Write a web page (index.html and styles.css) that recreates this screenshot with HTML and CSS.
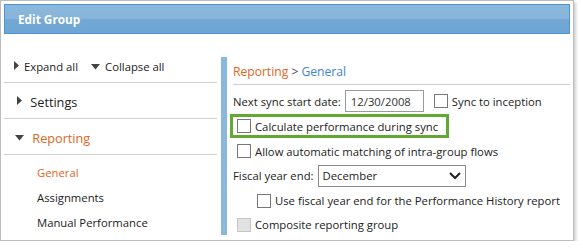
FILE: index.html
```html
<!DOCTYPE html>
<html lang="en">
<head>
    <meta charset="UTF-8">
    <meta name="viewport" content="width=device-width, initial-scale=1.0">
    <title>Edit Group</title>
    <link rel="stylesheet" href="styles.css">
</head>
<body>
    <div class="frame">
        <div class="title-bar">Edit Group</div>
        <div class="content">
            <div class="nav">
                <div class="nav-tools">
                    <span class="tool">
                        <svg width="5" height="9" viewBox="0 0 5 9"><path d="M0 0 L5 4.5 L0 9 Z" fill="#444"/></svg>
                        Expand all
                    </span>
                    <span class="tool">
                        <svg width="9" height="6" viewBox="0 0 9 6"><path d="M0 0 L9 0 L4.5 5.5 Z" fill="#444"/></svg>
                        Collapse all
                    </span>
                </div>
                <div class="nav-section">
                    <svg class="arrow-right" width="5" height="9" viewBox="0 0 5 9"><path d="M0 0 L5 4.5 L0 9 Z" fill="#444"/></svg>
                    Settings
                </div>
                <div class="nav-section open">
                    <svg class="arrow-down" width="9" height="6" viewBox="0 0 9 6"><path d="M0 0 L9 0 L4.5 5.5 Z" fill="#444"/></svg>
                    Reporting
                </div>
                <ul class="nav-items">
                    <li class="active">General</li>
                    <li>Assignments</li>
                    <li>Manual Performance</li>
                </ul>
            </div>
            <div class="panel">
                <div class="crumbs"><span class="crumb-parent">Reporting</span> &gt; <span class="crumb-current">General</span></div>
                <div class="row first">
                    <label>Next sync start date:</label>
                    <input class="date" type="text" value="12/30/2008">
                    <span class="check"></span>
                    <label>Sync to inception</label>
                </div>
                <div class="row highlight">
                    <span class="check"></span>
                    <label>Calculate performance during sync</label>
                </div>
                <div class="row">
                    <span class="check"></span>
                    <label>Allow automatic matching of intra-group flows</label>
                </div>
                <div class="row">
                    <label>Fiscal year end:</label>
                    <div class="select">
                        December
                        <svg width="12" height="8" viewBox="0 0 12 8"><path d="M1 1 L6 6 L11 1" fill="none" stroke="#222" stroke-width="2"/></svg>
                    </div>
                </div>
                <div class="row indent">
                    <span class="check"></span>
                    <label>Use fiscal year end for the Performance History report</label>
                </div>
                <div class="row last">
                    <span class="check disabled"></span>
                    <label>Composite reporting group</label>
                </div>
            </div>
        </div>
    </div>
</body>
</html>
```

FILE: styles.css
```css
body {
    margin: 0;
    padding: 0;
    background: white;
    font-family: "Open Sans", "Noto Sans", sans-serif;
    font-size: 11.3px;
    color: #222;
    white-space: nowrap;
}
.frame {
    width: 566px;
    height: 233px;
    padding: 3px;
    border: 1px solid #bdbdbd;
    background: white;
    box-shadow: 2px 2px 3px rgba(0, 0, 0, 0.2);
}
.title-bar {
    height: 28px;
    line-height: 28px;
    padding-left: 13px;
    border: 1px solid #4d94d4;
    background: linear-gradient(to bottom, #8bb8dd 0%, #86b4da 50%, #72a8d4 52%, #6ea5d2 100%);
    color: white;
    font-weight: bold;
    font-size: 11.8px;
}
.content {
    display: flex;
    height: 203px;
}
.nav {
    width: 213px;
    flex: none;
}
.nav-tools {
    display: flex;
    gap: 13px;
    padding: 24px 0 6px 10px;
    line-height: 18px;
    border-bottom: 1px solid #cfcfcf;
}
.tool svg {
    margin-right: 2px;
    vertical-align: 1px;
}
.nav-section {
    padding: 10px 0 7px 13px;
    line-height: 18px;
    font-size: 12.7px;
    border-bottom: 1px solid #cfcfcf;
}
.nav-section svg {
    margin-right: 5px;
    vertical-align: 2px;
}
.nav-section.open {
    color: #e0651c;
    padding-left: 11px;
}
.nav-items {
    list-style: none;
    margin: 0;
    padding: 5px 0 0 33px;
}
.nav-items li {
    line-height: 25px;
}
.nav-items li.active {
    color: #e0651c;
}
.panel {
    flex: 1;
    margin: 23px 0 2px 4px;
    border-left: 6px solid #8ab8dc;
    padding-left: 6px;
    display: flex;
    flex-direction: column;
    align-items: flex-start;
}
.crumbs {
    align-self: stretch;
    margin-top: 6px;
    line-height: 18px;
    padding-bottom: 3px;
    font-size: 12.1px;
    color: #444;
    border-bottom: 1px solid #cfcfcf;
}
.crumb-parent {
    color: #e0651c;
}
.crumb-current {
    color: #3b86c8;
}
.row {
    display: flex;
    align-items: center;
    height: 22px;
    margin-top: 3px;
    gap: 4px;
}
.row.first {
    margin-top: 5px;
}
.date {
    width: 79px;
    height: 22px;
    box-sizing: border-box;
    padding: 0 5px;
    border: 1px solid #9a9a9a;
    font: inherit;
    color: #333;
    margin-right: 2px;
}
.check {
    width: 12px;
    height: 12px;
    border: 1px solid #777;
    background: white;
    flex: none;
    margin-left: 4px;
}
.check.disabled {
    border-color: #c6c6c6;
    background: #e2e2e2;
}
.highlight {
    height: 20px;
    margin-top: 2px;
    border: 3px solid #62a834;
    margin-left: -3px;
    padding-right: 8px;
}
.select {
    width: 148px;
    height: 22px;
    box-sizing: border-box;
    border: 1px solid #8a8a8a;
    padding: 0 4px;
    display: flex;
    align-items: center;
    justify-content: space-between;
}
.indent {
    padding-left: 20px;
    margin-top: 4px;
}
.row.last {
    margin-top: 4px;
}
```
